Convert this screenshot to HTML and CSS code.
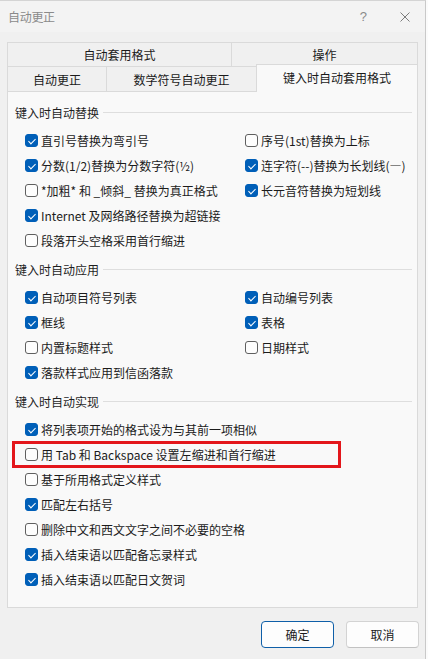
FILE: index.html
```html
<!DOCTYPE html>
<html lang="zh">
<head>
    <meta charset="UTF-8">
    <meta name="viewport" content="width=device-width, initial-scale=1.0">
    <title>自动更正</title>
    <link rel="stylesheet" href="styles.css">
</head>
<body>
    <div class="window">
        <div class="titlebar">
            <span class="title">自动更正</span>
            <div class="title-actions">
                <span class="help">?</span>
                <svg class="close" width="10" height="10" viewBox="0 0 10 10">
                    <path d="M0.5 0.5L9.5 9.5M9.5 0.5L0.5 9.5" stroke="#7c7c7c" stroke-width="1" fill="none"/>
                </svg>
            </div>
        </div>

        <div class="tabs">
            <div class="tab-row back">
                <div class="tab tab-format">自动套用格式</div>
                <div class="tab tab-actions">操作</div>
            </div>
            <div class="tab-row front">
                <div class="tab tab-correct">自动更正</div>
                <div class="tab tab-math">数学符号自动更正</div>
                <div class="tab tab-typing active">键入时自动套用格式</div>
            </div>
        </div>

        <div class="panel">
            <!-- 键入时自动替换 -->
            <div class="section">
                <div class="section-title">键入时自动替换</div>
                <div class="opts">
                    <label class="opt"><span class="cb on"></span>直引号替换为弯引号</label>
                    <label class="opt"><span class="cb"></span>序号(1st)替换为上标</label>
                    <label class="opt"><span class="cb on"></span>分数(1/2)替换为分数字符(½)</label>
                    <label class="opt"><span class="cb on"></span>连字符(--)替换为长划线(—)</label>
                    <label class="opt"><span class="cb"></span>*加粗* 和 _倾斜_ 替换为真正格式</label>
                    <label class="opt"><span class="cb on"></span>长元音符替换为短划线</label>
                    <label class="opt full"><span class="cb on"></span>Internet 及网络路径替换为超链接</label>
                    <label class="opt full"><span class="cb"></span>段落开头空格采用首行缩进</label>
                </div>
            </div>

            <!-- 键入时自动应用 -->
            <div class="section">
                <div class="section-title">键入时自动应用</div>
                <div class="opts">
                    <label class="opt"><span class="cb on"></span>自动项目符号列表</label>
                    <label class="opt"><span class="cb on"></span>自动编号列表</label>
                    <label class="opt"><span class="cb on"></span>框线</label>
                    <label class="opt"><span class="cb on"></span>表格</label>
                    <label class="opt"><span class="cb"></span>内置标题样式</label>
                    <label class="opt"><span class="cb"></span>日期样式</label>
                    <label class="opt full"><span class="cb on"></span>落款样式应用到信函落款</label>
                </div>
            </div>

            <!-- 键入时自动实现 -->
            <div class="section">
                <div class="section-title">键入时自动实现</div>
                <div class="opts single">
                    <label class="opt"><span class="cb on"></span>将列表项开始的格式设为与其前一项相似</label>
                    <label class="opt marked"><span class="cb"></span>用 Tab 和 Backspace 设置左缩进和首行缩进</label>
                    <label class="opt"><span class="cb"></span>基于所用格式定义样式</label>
                    <label class="opt"><span class="cb on"></span>匹配左右括号</label>
                    <label class="opt"><span class="cb"></span>删除中文和西文文字之间不必要的空格</label>
                    <label class="opt"><span class="cb on"></span>插入结束语以匹配备忘录样式</label>
                    <label class="opt"><span class="cb on"></span>插入结束语以匹配日文贺词</label>
                </div>
            </div>
        </div>

        <div class="footer">
            <button class="btn primary">确定</button>
            <button class="btn">取消</button>
        </div>
    </div>
</body>
</html>
```

FILE: styles.css
```css
* {
    box-sizing: border-box;
}
body {
    margin: 0;
    padding: 0;
    background-color: #fbfbfb;
    font-family: "Noto Sans CJK SC", "Noto Sans", sans-serif;
    font-size: 12px;
    color: #1b1b1b;
}
.window {
    width: 426px;
    height: 659px;
    background-color: #f0f0f0;
    border-top: 1px solid #d4d4d4;
    border-right: 1px solid #c9c9c9;
}
.titlebar {
    height: 31px;
    display: flex;
    align-items: center;
    justify-content: space-between;
    padding: 0 15px 0 8px;
    background-color: #f3f3f3;
    color: #8a8a8a;
}
.title {
    font-size: 12px;
    letter-spacing: -0.3px;
}
.title-actions {
    display: flex;
    align-items: center;
    gap: 33px;
}
.help {
    font-family: "Liberation Sans", sans-serif;
    font-size: 13px;
    color: #8a8a8a;
}
.close {
    display: block;
}

/* 标签页 */
.tabs {
    margin: 10px 7px 0;
}
.tab-row {
    display: flex;
    align-items: flex-end;
}
.tab-row.back {
    height: 24px;
}
.tab-row.front {
    height: 25px;
}
.tab {
    height: 100%;
    display: flex;
    align-items: center;
    justify-content: center;
    border: 1px solid #dadada;
    border-bottom: none;
    margin-left: -1px;
    background-color: #f0f0f0;
    color: #1a1a1a;
    white-space: nowrap;
}
.tab:first-child {
    margin-left: 0;
}
.tab-format {
    width: 225px;
}
.tab-actions {
    flex: 1;
}
.tab-correct {
    width: 100px;
}
.tab-math {
    width: 151px;
}
.tab-typing {
    flex: 1;
}
.tab.active {
    height: 28px;
    margin-bottom: -1px;
    padding-bottom: 2px;
    background-color: #f9f9f9;
    position: relative;
    z-index: 2;
}

/* 面板 */
.panel {
    height: 517px;
    margin: 0 7px;
    padding: 10px 5px 0 7px;
    border: 1px solid #dadada;
    background-color: #f9f9f9;
    position: relative;
    z-index: 1;
}
.section {
    margin-bottom: 6px;
}
.section-title {
    height: 20px;
    display: flex;
    align-items: center;
    color: #1f1f1f;
}
.section-title::after {
    content: "";
    flex: 1;
    height: 1px;
    margin-left: 4px;
    background-color: #dedede;
}
.opts {
    display: grid;
    grid-template-columns: 220px 1fr;
    margin-top: 6px;
    padding-left: 10px;
}
.opts.single {
    grid-template-columns: 1fr;
}
.opt {
    height: 25px;
    display: flex;
    align-items: center;
    gap: 3px;
    white-space: nowrap;
}
.opt.full {
    grid-column: 1 / -1;
}
.opt.marked {
    position: relative;
}
.opt.marked::after {
    content: "";
    position: absolute;
    top: -1px;
    bottom: -1px;
    left: -13px;
    width: 323px;
    border: 3px solid #e3161b;
}

/* 复选框 */
.cb {
    width: 13px;
    height: 13px;
    border: 1px solid #5f5f5f;
    border-radius: 3px;
    background-color: #fdfdfd;
    position: relative;
    flex-shrink: 0;
}
.cb.on {
    border-color: #005fb8;
    background-color: #005fb8;
}
.cb.on::after {
    content: "";
    position: absolute;
    left: 4px;
    top: 2px;
    width: 3px;
    height: 6px;
    border-right: 1px solid #fff;
    border-bottom: 1px solid #fff;
    transform: rotate(45deg);
}

/* 底部按钮 */
.footer {
    display: flex;
    justify-content: flex-end;
    gap: 12px;
    padding: 13px 6px 0 0;
}
.btn {
    width: 73px;
    height: 27px;
    font-family: "Noto Sans CJK SC", sans-serif;
    font-size: 12px;
    color: #1b1b1b;
    background-color: #fdfdfd;
    border: 1px solid #d3d3d3;
    border-bottom-color: #c2c2c2;
    border-radius: 4px;
    cursor: pointer;
}
.btn.primary {
    border: 1px solid #0f5fa8;
}
```
